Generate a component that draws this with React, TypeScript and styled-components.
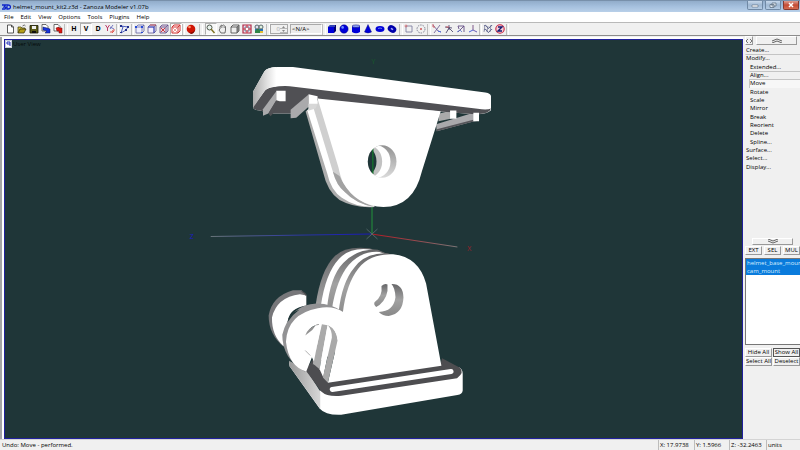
import React from "react";
import styled, { createGlobalStyle } from "styled-components";

const GlobalStyle = createGlobalStyle`
  * { box-sizing: border-box; }
  body {
    margin: 0;
    background: #f0f0f0;
    color: #000;
    font: 6px/8px "Open Sans", "Noto Sans", sans-serif;
  }
  button, input { font: inherit; color: inherit; margin: 0; padding: 0; border-radius: 0; }
  ul { margin: 0; padding: 0; list-style: none; }
  svg { display: block; }
`;

const Window = styled.div`
  display: flex;
  flex-direction: column;
  min-height: 100vh;
`;

const TitleBar = styled.header`
  display: flex;
  align-items: center;
  height: 12px;
  padding: 0 1px 0 2px;
  gap: 2px;
  border-top: 1px solid #7890ab;
  background: linear-gradient(#91acca, #a5c0de 50%, #b9d0e9);
`;

const Title = styled.h1`
  flex: 1;
  margin: 0;
  font-size: 6px;
  font-weight: 400;
  white-space: nowrap;
`;

const WindowButtons = styled.div`
  display: flex;
  align-self: flex-start;
  gap: 2px;
`;

const WindowButton = styled.button<{ $close?: boolean }>`
  display: grid;
  place-items: center;
  width: 16px;
  height: 9px;
  border: 1px solid ${(p) => (p.$close ? "#87392f" : "#7089a5")};
  border-top: 0;
  border-radius: 0 0 2px 2px;
  background: ${(p) =>
    p.$close
      ? "linear-gradient(#dda196, #c54b35 50%, #d56b50)"
      : "linear-gradient(#c8d9ec, #9fb8d3 50%, #b5cce4)"};
`;

const MenuBar = styled.nav`
  display: flex;
  align-items: center;
  height: 10px;
  padding-left: 4px;
  gap: 7px;
  background: #fff;
`;

const MenuItem = styled.button`
  border: 0;
  background: none;
  line-height: 8px;
`;

const Toolbar = styled.div`
  display: flex;
  align-items: center;
  height: 14px;
  padding-left: 4px;
  border-top: 1px solid #b9b9b9;
  border-bottom: 1px solid #8c8c8c;
  background: #f0f0f0;
`;

const Separator = styled.span<{ $gap: number }>`
  display: flex;
  justify-content: center;
  width: ${(p) => p.$gap}px;
  height: 11px;
  &::before {
    content: "";
    width: 2px;
    border-left: 1px solid #bdbdbd;
    border-right: 1px solid #fff;
  }
`;

const ToolButton = styled.button<{ $pressed?: boolean }>`
  display: grid;
  place-items: center;
  width: 12px;
  height: 12px;
  border: 1px solid;
  border-color: ${(p) => (p.$pressed ? "#b0b0b0 #fff #fff #b0b0b0" : "transparent")};
  background: ${(p) => (p.$pressed ? "#f8f8f8" : "none")};
  font: 700 7px/10px "Open Sans", sans-serif;
  svg { width: 12px; height: 12px; margin: -1px; }
`;

const Spinner = styled.div`
  display: flex;
  width: 18px;
  height: 10px;
  margin-right: 2px;
  border: 1px solid #a8a8a8;
  input {
    width: 9px;
    border: 0;
    background: #f0f0f0;
    color: #aaa;
    text-align: right;
  }
`;

const SpinButtons = styled.div`
  display: flex;
  flex-direction: column;
  flex: 1;
`;

const SpinButton = styled.button`
  display: grid;
  place-items: center;
  flex: 1;
  min-height: 0;
  border: 0;
  border-bottom: 1px solid #b8b8b8;
  background: #f0f0f0;
`;

const NameBox = styled.output`
  width: 32px;
  height: 10px;
  padding-left: 1px;
  border: 1px solid;
  border-color: #aaa #fff #fff #aaa;
  background: #ececec;
`;

const Workspace = styled.main`
  display: flex;
  flex: 1;
`;

const ViewFrame = styled.div`
  display: flex;
  flex: 1;
  min-width: 0;
  margin-top: 1px;
  padding: 2px 0 0 2px;
  border-left: 2px solid #a4a4a4;
  background: #fff;
`;

const Viewport = styled.section`
  position: relative;
  flex: 1;
  min-width: 0;
  border: 1px solid #20209c;
  background: #1f3638;
`;

const ViewLabel = styled.div`
  position: absolute;
  top: 0;
  left: 0;
  display: flex;
  align-items: center;
  gap: 1px;
  color: #050b0b;
`;

const ViewMenu = styled.button`
  width: 7px;
  height: 8px;
  border: 1px solid #c8d1dc;
  background: #fff;
`;

const SidePanel = styled.aside`
  display: flex;
  flex-direction: column;
  width: 57px;
  padding-left: 2px;
  overflow: hidden;
`;

const PanelHead = styled.div`
  display: flex;
  gap: 3px;
  height: 9px;
  padding-right: 3px;
`;

const PanelButton = styled.button<{ $fill?: boolean; $strong?: boolean }>`
  display: grid;
  place-items: center;
  flex: ${(p) => (p.$fill ? "1" : "0 0 8px")};
  min-width: 0;
  height: 9px;
  border: 1px solid;
  border-color: ${(p) => (p.$strong ? "#555" : "#fff #999 #999 #fff")};
  background: #f0f0f0;
  line-height: 7px;
  white-space: nowrap;
`;

const CommandList = styled.ul`
  display: grid;
  grid-auto-rows: 1fr;
  height: 125px;
  margin-top: 1px;
`;

const Command = styled.li<{ $nested?: boolean; $raised?: boolean; $pressed?: boolean }>`
  display: flex;
  margin-left: ${(p) => (p.$nested ? "4px" : "0")};
  border-top: 1px solid ${(p) => (p.$raised || p.$pressed ? "#c4c4c4" : "transparent")};
  border-left: 1px solid ${(p) => (p.$pressed ? "#c4c4c4" : "transparent")};
  background: ${(p) => (p.$pressed ? "#f7f7f7" : "none")};
  button {
    border: 0;
    background: none;
    line-height: 7px;
  }
`;

const ScrollDown = styled.div`
  display: flex;
  margin-top: 67px;
  padding: 0 7px;
  button { height: 7px; }
`;

const ButtonRow = styled.div<{ $gap: number; $top: number }>`
  display: flex;
  gap: ${(p) => p.$gap}px;
  margin-top: ${(p) => p.$top}px;
`;

const ObjectList = styled.ul`
  height: 87px;
  margin-top: 3px;
  border: 1px solid #777;
  border-right: 0;
  background: #fff;
  overflow: hidden;
`;

const ObjectItem = styled.li`
  height: 8px;
  padding-left: 1px;
  background: #0a7bdc;
  color: #d7efff;
  white-space: nowrap;
`;

const StatusBar = styled.footer`
  display: flex;
  height: 11px;
  border-top: 1px solid #d4d4d4;
  background: #f0f0f0;
`;

const StatusPane = styled.span<{ $width?: number }>`
  flex: ${(p) => (p.$width ? `0 0 ${p.$width}px` : "1")};
  padding: 1px 0 0 1px;
  border-left: 1px solid ${(p) => (p.$width ? "#bcbcbc" : "transparent")};
  white-space: nowrap;
`;

const blue = "#0000d8";
const navy = "#00006f";

const icons: Record<string, React.ReactNode> = {
  new: <path d="M3.500 2h4l2 2v6h-6z M7.500 2v2h2" fill="#fff" stroke="#333" strokeWidth=".8" />,
  open: (
    <>
      <path d="M2 10V4h3l1 1h3v2" fill="#d3c23b" stroke="#39350a" strokeWidth=".7" />
      <path d="M2 10l2-4h6l-2 4z" fill="#b59f18" stroke="#29270b" strokeWidth=".7" />
      <path d="M6.500 3q2-2 3 0" fill="none" stroke="#333" strokeWidth=".7" />
    </>
  ),
  save: (
    <>
      <path d="M2 2.500h8v7.500H2z" fill="#5b5b17" stroke="#171700" strokeWidth=".8" />
      <path d="M4 3h4v3H4z" fill="#eee" />
      <path d="M4 8h4v2H4z" fill="#111" />
    </>
  ),
  importFile: (
    <>
      <path d="M2 1.500h4l2 2V8H2z" fill="#fff" stroke="#333" strokeWidth=".7" />
      <path d="M3 4l4 1 3 1v4H5l2-2-4-1z" fill="#1834df" stroke="#06105e" strokeWidth=".5" />
    </>
  ),
  exportFile: (
    <>
      <path d="M2 1.500h4l2 2V8H2z" fill="#fff" stroke="#333" strokeWidth=".7" />
      <path d="M4 5l3-1v1h3v5H7V8H5z" fill="#dc1710" stroke="#6b0909" strokeWidth=".5" />
    </>
  ),
  axes: (
    <>
      <path d="M1.500 2l2 3 2-3M3.500 5v3" fill="none" stroke="#bb3b68" />
      <path d="M6 6l3-4M6 4l4 2" stroke="#555bb8" strokeWidth=".8" />
      <path d="M6 9h2l1-2h2M8 10l2-2" fill="none" stroke="#df4a42" strokeWidth=".9" />
    </>
  ),
  polygon: (
    <>
      <path d="M2 3l7 1-2 3-5 3 2-6z" fill="none" stroke="#2940b7" strokeWidth=".8" />
      <path d="M1 2h2v2H1zM8 3h2v2H8zM1 9h2v1H1zM6 6h2v2H6z" fill="#25308a" />
    </>
  ),
  vertices: (
    <>
      <path d="M2 4h6v6H2zM2 4l2-2h6L8 4M10 2v6l-2 2" fill="#eef" stroke="#62639c" strokeWidth=".8" />
      <path d="M1 3h2v2H1zM7 3h2v2H7zM7 9h2v1H7z" fill="#254bd7" />
    </>
  ),
  edges: (
    <>
      <path d="M2 4h6v6H2zM2 4l2-2h6L8 4M10 2v6l-2 2" fill="#f4efff" stroke="#5e568b" strokeWidth=".8" />
      <path d="M8 4v6M2 4h6" stroke="#293ac9" strokeWidth=".8" />
      <path d="M4 2h6" stroke="#c4525a" />
    </>
  ),
  faces: (
    <>
      <path d="M2 4h6v6H2zM2 4l2-2h6L8 4M10 2v6l-2 2" fill="#e8d5e2" stroke="#5c4a86" strokeWidth=".8" />
      <path d="M3 5l4 4M7 5L3 9" stroke="#cb3840" />
    </>
  ),
  objects: (
    <>
      <path d="M2 4h6v6H2zM2 4l2-2h6L8 4M10 2v6l-2 2" fill="#fff" stroke="#d43131" />
      <path d="M3 5l4 4M7 5L3 9" stroke="#df5953" strokeWidth=".6" />
    </>
  ),
  material: (
    <>
      <circle cx="6" cy="6" r="4.300" fill="#cf1404" />
      <path d="M3 9q4 2 7-2-1 4-4 4z" fill="#7f0800" />
      <circle cx="4.500" cy="4" r="1.300" fill="#ff9a72" />
    </>
  ),
  zoom: (
    <>
      <circle cx="4.500" cy="4.500" r="2.500" fill="#e9f2ed" stroke="#4e594e" />
      <path d="M6 6l3.500 4" stroke="#807526" strokeWidth="1.500" />
    </>
  ),
  pan: (
    <>
      <path d="M3 6V3.500l1-.5.500-1 1 .5 1-.5 1 .8 1 .7V7L8 10H4L2 7z" fill="#eee" stroke="#4b4b4b" strokeWidth=".8" />
      <path d="M4.500 3v2M6 3v2M7.500 3.500V5" stroke="#555" strokeWidth=".5" />
    </>
  ),
  cube: (
    <>
      <path d="M2 4h6v6H2zM2 4l2-2h6L8 4M10 2v6l-2 2" fill="#eee" stroke="#444" strokeWidth=".8" />
      <path d="M8 4l2-2v6l-2 2z" fill="#777" />
    </>
  ),
  fit: (
    <>
      <path d="M2 2h8v8H2z" fill="#f3e2ed" stroke="#ae2947" strokeWidth="1.200" />
      <path d="M4 4h4v4H4z" fill="#fff" stroke="#35476c" strokeWidth=".7" />
      <path d="M2 6h3M7 6h3M6 2v3M6 7v3" stroke="#d8313c" />
    </>
  ),
  render: (
    <>
      <path d="M2 6h8v4H2z" fill="#2474bd" />
      <path d="M2 8l3-3 4 5H2z" fill="#318447" />
      <path d="M7 8h3v2H7z" fill="#e4be35" />
      <circle cx="4" cy="4" r="2" fill="#dde" stroke="#3b4b50" strokeWidth=".8" />
      <circle cx="8" cy="4" r="2" fill="#ded" stroke="#3b4b50" strokeWidth=".8" />
    </>
  ),
  box: (
    <>
      <path d="M2 4l2-2h6v6l-2 2H2z" fill={navy} />
      <path d="M2 4h6v6H2z" fill={blue} />
      <path d="M3 3h6" stroke="#6686ff" />
    </>
  ),
  sphere: (
    <>
      <circle cx="6" cy="6" r="4.200" fill={blue} stroke={navy} strokeWidth=".4" />
      <circle cx="4.600" cy="4.400" r="1.300" fill="#6e8cff" />
    </>
  ),
  cylinder: (
    <>
      <path d="M2 3v6q4 2.500 8 0V3" fill={blue} />
      <ellipse cx="6" cy="3.200" rx="4" ry="1.300" fill="#91a3f7" stroke={navy} strokeWidth=".5" />
    </>
  ),
  cone: <path d="M6 1.500L9.500 9Q6 11 2.500 9z" fill={blue} stroke={navy} strokeWidth=".4" />,
  torus: (
    <>
      <ellipse cx="6" cy="6" rx="4.500" ry="3" fill={blue} />
      <path d="M4 5.500q2-1 4 0" fill="none" stroke="#8299f4" strokeWidth=".8" />
    </>
  ),
  ring: (
    <>
      <ellipse cx="6" cy="6" rx="4.500" ry="3.500" fill="#0000a8" transform="rotate(30 6 6)" />
      <ellipse cx="6" cy="6" rx="1.500" ry="1" fill="#dbe2ff" stroke={blue} strokeWidth=".6" transform="rotate(30 6 6)" />
    </>
  ),
  rectSelect: (
    <>
      <path d="M3 3h6v6H3z" fill="none" stroke="#8080a1" strokeWidth=".9" />
      <path d="M1.500 3h3M3 1.500v3" stroke="#d26769" strokeWidth=".8" />
    </>
  ),
  circleSelect: (
    <>
      <circle cx="6" cy="6" r="4" fill="none" stroke="#7f8192" strokeDasharray="1.500 1" />
      <path d="M5 6h2M6 5v2" stroke="#cf5454" />
    </>
  ),
  localX: (
    <>
      <path d="M2 2l5 6 3 1M9 2L6 6l-3 4" fill="none" stroke="#67548f" strokeWidth=".8" />
      <path d="M2 1v3h2" fill="none" stroke="#cf636a" />
      <path d="M7 8l3 1" stroke="#4967df" />
    </>
  ),
  localY: (
    <>
      <path d="M6 2v5M6 5L3 10M6 5l4 4M2 4l7 1" stroke="#504b6f" strokeWidth=".9" />
      <path d="M3 4h3" stroke="#c95b61" />
    </>
  ),
  scaleAxis: (
    <>
      <path d="M3 3h6v6M9 3L3 9M3 3l1 3" fill="none" stroke="#624c83" strokeWidth=".9" />
      <path d="M2 9l3-2 2 2" fill="none" stroke="#5c72cb" strokeWidth=".8" />
    </>
  ),
  axisCenter: (
    <>
      <path d="M6 2v5" stroke="#805a8a" />
      <path d="M6 7l-4 2" stroke="#4e62d8" />
      <path d="M6 7l4 2" stroke="#6b5bb0" />
    </>
  ),
  grid: (
    <>
      <path d="M2 3q2-2 3 1t3 0 2-1M2 7q2-2 3 1t3 0 2-1" fill="none" stroke="#444b7d" strokeWidth=".9" />
      <path d="M3 2l-1 7M6 3L5 9M9 2L8 9" stroke="#6d7193" strokeWidth=".7" />
    </>
  ),
  zLogo: (
    <>
      <circle cx="6" cy="6" r="4.200" fill="#f4d0db" stroke="#ca2441" strokeWidth="1.100" />
      <path d="M4 4h4L4 8h4" fill="none" stroke="#171a70" strokeWidth="1.400" />
    </>
  ),
};

const Icon = ({ name }: { name: string }) => (
  <svg viewBox="0 0 12 12" aria-hidden="true">{icons[name]}</svg>
);

type Group = { tools: string[]; gap: number; pressed?: string };

const fileGroups: Group[] = [
  { tools: ["new", "open", "save", "importFile", "exportFile"], gap: 4 },
  { tools: ["H", "V", "D", "axes"], gap: 3, pressed: "V" },
  { tools: ["polygon"], gap: 3 },
  { tools: ["vertices", "edges", "faces", "objects"], gap: 3, pressed: "objects" },
  { tools: ["material"], gap: 8 },
  { tools: ["zoom", "pan", "cube", "fit", "render"], gap: 5, pressed: "zoom" },
];

const shapeGroups: Group[] = [
  { tools: ["box", "sphere", "cylinder", "cone", "torus", "ring"], gap: 5 },
  { tools: ["rectSelect", "circleSelect"], gap: 4 },
  { tools: ["localX", "localY", "scaleAxis", "axisCenter"], gap: 3 },
  { tools: ["grid", "zLogo"], gap: 3 },
];

const ToolGroups = ({ groups }: { groups: Group[] }) => (
  <>
    {groups.map((group) => (
      <React.Fragment key={group.tools[0]}>
        {group.tools.map((tool) => (
          <ToolButton key={tool} aria-label={tool} $pressed={group.pressed === tool}>
            {icons[tool] ? <Icon name={tool} /> : tool}
          </ToolButton>
        ))}
        <Separator $gap={group.gap} />
      </React.Fragment>
    ))}
  </>
);

const SceneSvg = styled.svg`
  width: 100%;
  height: 100%;
  font: 7px "Open Sans", sans-serif;
`;

const CamMount = () => (
  <g transform="translate(240 50) scale(.33333)">
    <path d="M590 222L702 188L719 212L702 214L592 243z" fill="#a9a9ac" />
    <path d="M592 237L702 209V214L592 243z" fill="#55555a" />
    <path d="M600 190L634 182V206L597 213z" fill="#aaa" />
    <path d="M40 125L74 64Q82 50 115 50H160L738 127Q755 130 755 138V180Q742 193 705 192L602 184L235 146L160 190H100L60 181Q40 180 40 170z" fill="#fff" />
    <path d="M40 170L78 119Q100 106 150 108L715 176Q744 180 755 175Q750 193 705 192L602 184L235 147L160 190H98L60 181Q40 180 40 170z" fill="#505054" />
    <path d="M40 125L74 64Q82 52 110 50V109Q88 109 75 122L40 173z" fill="url(#plateSide)" />
    <path d="M70 177L110 123V151L86 190L70 197z" fill="#aaaaac" />
    <path d="M86 190L110 150L116 153L102 188L93 198z" fill="#505054" />
    <path d="M110 122H138V153H120L110 150z" fill="#fff" />
    <path d="M198 184L234 152L405 471Q345 475 300 450Q263 424 251 368z" fill="#adadad" />
    <path d="M203 180L234 160L405 470Q348 472 307 443Q274 421 263 370z" fill="#fff" />
    <path d="M221 171L237 145L320 330L405 471Q348 460 315 425Q291 406 280 365z" fill="#cfcfcf" />
    <path d="M280 365Q291 406 315 425Q350 462 405 471Q330 445 300 378z" fill="#a2a2a2" />
    <path d="M234 145L604 183L547 365Q522 470 432 471Q350 467 311 398Q303 383 297 353z" fill="#fff" />
    <path d="M153 179L207 133V170L170 203L153 204z" fill="#aaaaac" />
    <path d="M207 132L234 138V161L207 172z" fill="#fff" />
    <path d="M207 161H234L228 175L206 182z" fill="#d7d7d7" />
    <path d="M632 181H651V206H632zM702 188H719V213H702z" fill="#fff" />
    <clipPath id="topHole"><ellipse cx="428" cy="334" rx="43" ry="49" /></clipPath>
    <g clipPath="url(#topHole)">
      <rect x="380" y="280" width="100" height="110" fill="url(#holeShade)" />
      <ellipse cx="410" cy="334" rx="43" ry="49" fill="#fff" />
      <ellipse cx="386" cy="334" rx="42" ry="49" fill="#c2c2c2" />
      <ellipse cx="371" cy="334" rx="40" ry="46" fill="#1f3638" />
      <path d="M400 294V372" stroke="#14712c" strokeWidth="4" />
    </g>
  </g>
);

const BaseMount = () => (
  <g transform="translate(260 235) scale(.33333)">
    <path d="M88 380L170 470L545 395L600 398Q610 403 610 417V467Q609 478 594 481L245 540Q198 542 180 521L90 394z" fill="#fff" />
    <path d="M88 378L140 404L182 470V523L90 394z" fill="url(#baseSide)" />
    <path d="M138 406L165 365L205 440L543 388L548 370L602 399Q616 414 593 430L245 483Q203 487 185 470z" fill="#4d4d50" />
    <path d="M218 464L575 410" stroke="#fff" strokeWidth="15" strokeLinecap="round" />
    <path d="M168 212Q183 105 226 63Q258 32 330 40L400 62V242L160 390z" fill="url(#ribShade)" />
    <path d="M184 212Q198 115 238 72Q272 35 335 44L400 62V242L165 390z" fill="#fff" />
    <path d="M202 222Q212 124 251 84Q292 41 355 44L400 64V252z" fill="url(#ribShade)" />
    <path d="M217 222Q231 133 268 89Q307 47 360 51L400 66V252z" fill="#fff" />
    <path d="M237 232Q247 142 284 98Q318 52 385 55L410 65V252z" fill="url(#ribShade)" />
    <path d="M187 268L204 271L180 403L160 386z" fill="#aaa" />
    <path d="M204 271L217 300L191 427L180 403z" fill="#fff" />
    <path d="M250 232Q260 148 296 101Q331 56 401 58Q478 66 500 146L546 393L205 444L234 318z" fill="#fff" />
    <path d="M205 270Q234 284 234 317L205 444L190 428L217 308Q218 287 205 270z" fill="#a9a9a9" />
    <path d="M72 336Q27 299 27 242Q37 184 100 166L126 166L140 180V212Q88 219 84 260L79 300z" fill="#77777a" />
    <path d="M72 334Q36 303 37 248Q51 187 121 178L140 182V212Q89 220 84 260z" fill="#fff" />
    <path d="M134 410Q68 371 68 300Q91 209 171 206Q218 206 251 232L180 235L138 303L156 367L138 410z" fill="#929294" />
    <path d="M157 367L140 410Q88 397 79 321Q83 237 175 220Q219 210 252 232L234 317Q229 272 190 266Q158 264 135 304L157 330z" fill="#fff" />
    <path d="M128 300L168 272L185 269L163 380L157 367L128 350z" fill="#fff" />
    <path d="M137 302Q145 279 168 272L158 285z" fill="#929292" />
    <path d="M137 347L152 362" stroke="#888" strokeWidth="2" />
    <path d="M126 169Q137 174 140 182" fill="none" stroke="#4d4d50" strokeWidth="4" />
    <path d="M84 261Q88 235 120 224Q100 238 84 261z" fill="#1f3638" />
    <path d="M366 153Q377 144 384 149Q388 187 360 210L350 216Q342 210 345 202Q370 184 366 153z" fill="url(#ribShade)" />
    <path d="M396 147Q431 146 432 188Q430 237 388 243Q369 243 358 231Q402 230 408 187Q407 159 396 147z" fill="url(#ribShade)" />
  </g>
);

const Scene = () => (
  <SceneSvg viewBox="5 40 738 398" role="img" aria-label="Helmet mount model">
    <defs>
      <linearGradient id="plateSide"><stop stopColor="#aaa" /><stop offset=".6" stopColor="#e0e0e0" /><stop offset="1" stopColor="#fff" /></linearGradient>
      <linearGradient id="holeShade" x1="0" x2="0" y1="0" y2="1"><stop stopColor="#8e8e8e" /><stop offset="1" stopColor="#e0e0e0" /></linearGradient>
      <linearGradient id="baseSide"><stop stopColor="#999" /><stop offset="1" stopColor="#d7d7d7" /></linearGradient>
      <linearGradient id="ribShade" x1="0" x2="0" y1="0" y2="1"><stop stopColor="#666668" /><stop offset=".5" stopColor="#a2a2a2" /><stop offset="1" stopColor="#888" /></linearGradient>
      <linearGradient id="zAxis" gradientUnits="userSpaceOnUse" x1="211" x2="372" y1="0" y2="0"><stop stopColor="#68757a" /><stop offset=".6" stopColor="#2833a4" /><stop offset="1" stopColor="#1919b8" /></linearGradient>
      <linearGradient id="xAxis" gradientUnits="userSpaceOnUse" x1="372" x2="458" y1="0" y2="0"><stop stopColor="#b71822" /><stop offset="1" stopColor="#7c7778" /></linearGradient>
    </defs>
    <path d="M211 236.500L372 234" stroke="url(#zAxis)" />
    <path d="M372 234L458 247" stroke="url(#xAxis)" />
    <path d="M372.500 205V234" stroke="#22943a" />
    <path d="M367 229L378 239M378 229L367 239" stroke="#5c7072" strokeWidth=".8" />
    <text x="372" y="64" fill="#175c2b">Y</text>
    <text x="468" y="251" fill="#a0202a">X</text>
    <text x="190" y="239" fill="#1c1cc0">Z</text>
    <CamMount />
    <BaseMount />
  </SceneSvg>
);

const Chevron = ({ down }: { down?: boolean }) => (
  <svg width="12" height="5" viewBox="0 0 12 5" aria-hidden="true">
    <path
      d={down ? "M1 0l5 2 5-2M1 2l5 2 5-2" : "M1 3l5-2 5 2M1 5l5-2 5 2"}
      fill="none"
      stroke="#555"
      strokeWidth=".9"
    />
  </svg>
);

const menus = ["File", "Edit", "View", "Options", "Tools", "Plugins", "Help"];
const nested = ["Extended...", "Align...", "Move", "Rotate", "Scale", "Mirror", "Break", "Reorient", "Delete", "Spline..."];
const commands = ["Create...", "Modify...", ...nested, "Surface...", "Select...", "Display..."];

export default function App() {
  return (
    <>
      <GlobalStyle />
      <Window>
        <TitleBar>
          <svg width="9" height="8" viewBox="0 0 9 8" aria-hidden="true">
            <path d="M0 2h3.500L2 4q3 0 1 2H0M5 2h1q2.500 0 2.500 2T6 6H5z" fill="none" stroke="#0c24c9" strokeWidth="1.300" />
          </svg>
          <Title>helmet_mount_kit2.z3d - Zanoza Modeler v1.07b</Title>
          <WindowButtons>
            <WindowButton aria-label="Minimize">
              <svg width="8" height="6" viewBox="0 0 8 6"><path d="M1 3h6v2H1z" fill="#fff" stroke="#5b6c80" strokeWidth=".6" /></svg>
            </WindowButton>
            <WindowButton aria-label="Restore">
              <svg width="8" height="6" viewBox="0 0 8 6"><path d="M3 1h4v3H3zM1 2.500h4v3H1z" fill="#e2eaf2" stroke="#56677a" strokeWidth=".7" /></svg>
            </WindowButton>
            <WindowButton $close aria-label="Close">
              <svg width="8" height="6" viewBox="0 0 8 6"><path d="M2 1l4 4M6 1L2 5" stroke="#fff" strokeWidth="1.500" /></svg>
            </WindowButton>
          </WindowButtons>
        </TitleBar>
        <MenuBar>
          {menus.map((menu) => <MenuItem key={menu}>{menu}</MenuItem>)}
        </MenuBar>
        <Toolbar>
          <ToolGroups groups={fileGroups} />
          <Spinner>
            <input aria-label="Level" defaultValue="0" />
            <SpinButtons>
              <SpinButton aria-label="Increase"><svg width="3" height="2" viewBox="0 0 3 2"><path d="M0 2L1.500 0L3 2z" fill="#888" /></svg></SpinButton>
              <SpinButton aria-label="Decrease"><svg width="3" height="2" viewBox="0 0 3 2"><path d="M0 0h3L1.500 2z" fill="#888" /></svg></SpinButton>
            </SpinButtons>
          </Spinner>
          <NameBox>&lt;N/A&gt;</NameBox>
          <Separator $gap={4} />
          <ToolGroups groups={shapeGroups} />
        </Toolbar>
        <Workspace>
          <ViewFrame>
            <Viewport>
              <Scene />
              <ViewLabel>
                <ViewMenu aria-label="View menu">
                  <svg width="5" height="6" viewBox="0 0 5 6"><path d="M1 1h3v4M1 1v2h3" fill="none" stroke="#2332b8" /></svg>
                </ViewMenu>
                User View
              </ViewLabel>
            </Viewport>
          </ViewFrame>
          <SidePanel>
            <PanelHead>
              <PanelButton aria-label="Toggle panel side">
                <svg width="6" height="6" viewBox="0 0 6 6"><path d="M2 1L0 3l2 2M4 1l2 2-2 2" fill="none" stroke="#555" strokeWidth=".8" /></svg>
              </PanelButton>
              <PanelButton $fill aria-label="Scroll up"><Chevron /></PanelButton>
            </PanelHead>
            <CommandList>
              {commands.map((name) => (
                <Command
                  key={name}
                  $nested={nested.includes(name)}
                  $raised={name === "Modify..." || name === "Align..."}
                  $pressed={name === "Move"}
                >
                  <button>{name}</button>
                </Command>
              ))}
            </CommandList>
            <ScrollDown>
              <PanelButton $fill aria-label="Scroll down"><Chevron down /></PanelButton>
            </ScrollDown>
            <ButtonRow $gap={2} $top={1}>
              {["EXT", "SEL", "MUL"].map((name) => <PanelButton $fill key={name}>{name}</PanelButton>)}
            </ButtonRow>
            <ObjectList aria-label="Objects">
              <ObjectItem>helmet_base_mount</ObjectItem>
              <ObjectItem>cam_mount</ObjectItem>
            </ObjectList>
            <ButtonRow $gap={1} $top={3}>
              <PanelButton $fill>Hide All</PanelButton>
              <PanelButton $fill $strong>Show All</PanelButton>
            </ButtonRow>
            <ButtonRow $gap={1} $top={0}>
              <PanelButton $fill>Select All</PanelButton>
              <PanelButton $fill>Deselect</PanelButton>
            </ButtonRow>
          </SidePanel>
        </Workspace>
        <StatusBar>
          <StatusPane>Undo: Move - performed.</StatusPane>
          <StatusPane $width={36}>X: 17.9738</StatusPane>
          <StatusPane $width={35}>Y: 1.5966</StatusPane>
          <StatusPane $width={37}>Z: -32.2463</StatusPane>
          <StatusPane $width={34}>units</StatusPane>
        </StatusBar>
      </Window>
    </>
  );
}
